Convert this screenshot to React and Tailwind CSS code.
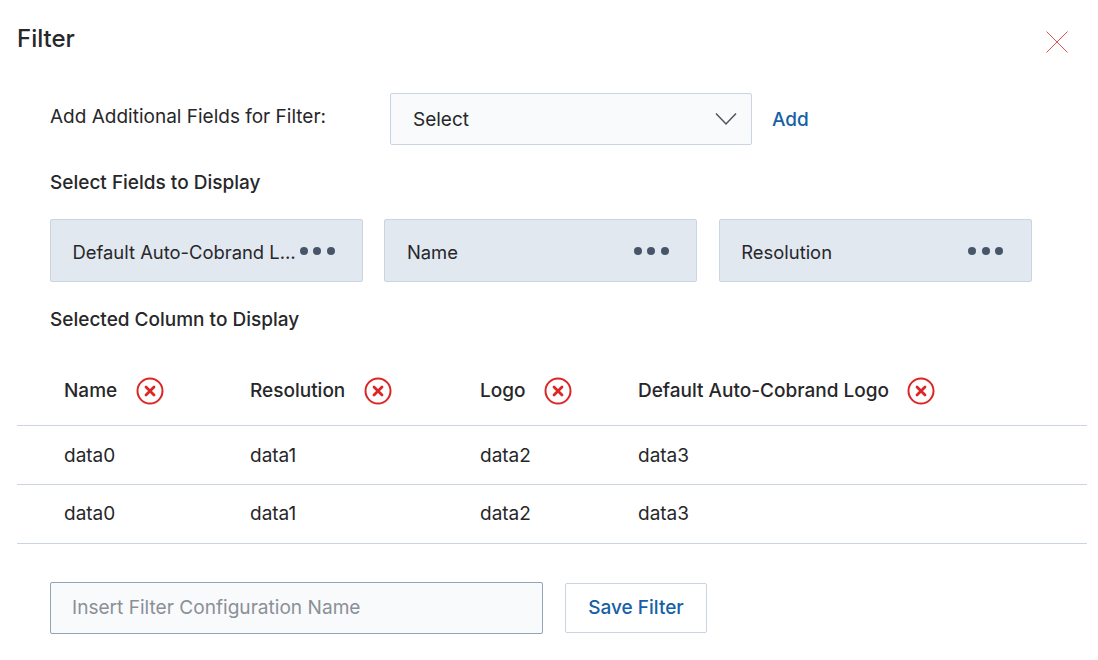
// Filter dialog
const FONT = { fontFamily: 'Inter, "Noto Sans", sans-serif' };

function Dots() {
  return (
    <div className="flex shrink-0 items-center gap-[5.5px]">
      <span className="h-2 w-2 rounded-full bg-[#475569]" />
      <span className="h-2 w-2 rounded-full bg-[#475569]" />
      <span className="h-2 w-2 rounded-full bg-[#475569]" />
    </div>
  );
}

function FieldChip({ label }) {
  return (
    <div className="flex h-[63px] w-[313px] items-center justify-between rounded-[2px] border border-[#cbd5e1] bg-[#e2e8f0] pl-[21.5px] pr-[27.5px] text-[18.4px] text-[#27272a]">
      <span className="mt-[4px] max-w-[228px] truncate">{label}</span>
      <Dots />
    </div>
  );
}

function RemoveIcon() {
  return (
    <svg width="28" height="28" viewBox="0 0 28 28" fill="none" className="shrink-0">
      <circle cx="14" cy="14" r="12.5" stroke="#dc2626" strokeWidth="2" />
      <path d="M10 10l8 8M18 10l-8 8" stroke="#dc2626" strokeWidth="2.8" strokeLinecap="round" />
    </svg>
  );
}

function HeaderCell({ label }) {
  return (
    <div className="flex items-center gap-[18.5px]">
      <span className="mt-[2px]">{label}</span>
      <RemoveIcon />
    </div>
  );
}

function Row({ className }) {
  return (
    <div className={`grid h-[59px] grid-cols-[186px_230px_158px_1fr] items-center border-b border-[#cbd5e1] pl-[47px] text-[19px] text-[#27272a] ${className}`}>
      <span>data0</span>
      <span>data1</span>
      <span>data2</span>
      <span>data3</span>
    </div>
  );
}

export default function App() {
  return (
    <div className="h-[660px] w-[1098px] overflow-hidden bg-white" style={FONT}>
      <div className="flex items-start justify-between pl-[17px] pr-[29px] pt-[24px]">
        <h1 className="text-[24px] font-medium leading-[30px] text-[#27272a]">Filter</h1>
        <svg width="24" height="24" viewBox="0 0 24 24" fill="none" className="mt-[6px]">
          <path d="M1.5 1.5l21 21M22.5 1.5l-21 21" stroke="#dc2626" strokeWidth="0.8" />
        </svg>
      </div>

      <div className="mt-[39px] flex items-center pl-[50px]">
        <span className="-mt-[4px] w-[340px] text-[19px] text-[#27272a]">Add Additional Fields for Filter:</span>
        <div className="flex h-[52px] w-[362px] items-center justify-between rounded-[2px] border border-[#cbd5e1] bg-[#f8fafc] pl-[22px] pr-[14px] text-[19px] text-[#27272a]">
          <span className="mt-[2px]">Select</span>
          <svg width="22" height="14" viewBox="0 0 22 14" fill="none">
            <path d="M1 1.5l10 10.5L21 1.5" stroke="#52525b" strokeWidth="1.5" />
          </svg>
        </div>
        <span className="ml-5 mt-[2px] text-[19px] font-medium text-[#1560a8]">Add</span>
      </div>

      <div className="mt-[26px] pl-[50px] text-[19px] font-medium leading-6 text-[#27272a]">Select Fields to Display</div>

      <div className="mt-[24px] flex gap-[21.4px] pl-[50px]">
        <FieldChip label="Default Auto-Cobrand Logo" />
        <FieldChip label="Name" />
        <FieldChip label="Resolution" />
      </div>

      <div className="mt-[26px] pl-[50px] text-[19px] font-medium leading-6 text-[#27272a]">Selected Column to Display</div>

      <div className="ml-[17px] mt-[24px] w-[1070px]">
        <div className="grid h-[70px] grid-cols-[186px_230px_158px_1fr] items-center border-b border-[#cbd5e1] pl-[47px] text-[19px] font-medium text-[#27272a]">
          <HeaderCell label="Name" />
          <HeaderCell label="Resolution" />
          <HeaderCell label="Logo" />
          <HeaderCell label="Default Auto-Cobrand Logo" />
        </div>
        <Row className="pt-[2px]" />
        <Row className="" />
      </div>

      <div className="mt-[38px] flex items-center pl-[50px]">
        <input
          placeholder="Insert Filter Configuration Name"
          className="h-[52px] w-[493px] rounded-[2px] border border-[#94a3b8] bg-[#f8fafc] px-[21px] pb-[2px] text-[19.1px] text-[#27272a] placeholder:text-[#8b8f96]"
        />
        <button className="ml-[22px] h-[50px] w-[142px] rounded-[2px] border border-[#cbd5e1] bg-white text-[19px] font-medium text-[#1560a8]">
          Save Filter
        </button>
      </div>
    </div>
  );
}
